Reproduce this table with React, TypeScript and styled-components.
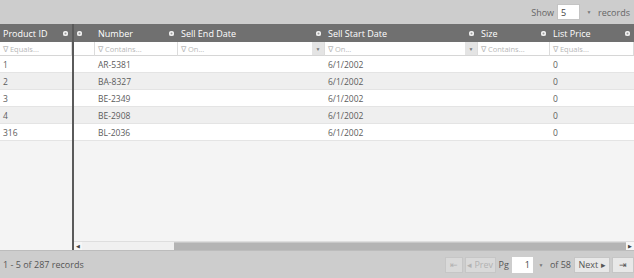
import React from 'react'
import styled, { createGlobalStyle } from 'styled-components'

const GlobalStyle = createGlobalStyle`
  body {
    margin: 0;
    background: #f4f4f4;
    font-family: 'Open Sans', 'Noto Sans', sans-serif;
  }
`

const Page = styled.div`
  width: 634px;
  height: 278px;
  display: flex;
  flex-direction: column;
  overflow: hidden;
  font-size: 8.5px;
  color: #555;
`

const TopBar = styled.div`
  height: 24px;
  background: #cdcdcd;
  display: flex;
  align-items: center;
  justify-content: flex-end;
  padding-right: 4px;
  gap: 3px;
  color: #666;
  font-size: 9px;
`

const ShowInput = styled.div`
  width: 23px;
  height: 16px;
  box-sizing: border-box;
  background: #fff;
  border: 1px solid #c4c4c4;
  display: flex;
  align-items: center;
  padding-left: 3px;
  color: #444;
`

const Caret = styled.span`
  width: 12px;
  text-align: center;
  font-size: 5px;
  color: #777;
`

const Body = styled.div`
  flex: 1;
  display: flex;
  min-height: 0;
`

const Pane = styled.div<{ $w?: number }>`
  display: flex;
  flex-direction: column;
  ${(p) => (p.$w ? `width: ${p.$w}px;` : 'flex: 1; min-width: 0;')}
`

const Divider = styled.div`
  width: 2px;
  background: #5a5a5a;
`

const Row = styled.div<{ $cols: string }>`
  display: grid;
  grid-template-columns: ${(p) => p.$cols};
`

const HeadCell = styled.div`
  height: 18px;
  background: #707070;
  color: #fff;
  display: flex;
  align-items: center;
  justify-content: space-between;
  padding: 0 4px 0 3px;
  font-size: 9px;
  white-space: nowrap;
`

const Gear = styled.span`
  width: 5px;
  height: 5px;
  border-radius: 50%;
  background: #f2f2f2;
  box-shadow: inset 0 0 0 1.5px #f2f2f2, inset 0 0 0 3px #9a9a9a;
  flex-shrink: 0;
`

const FilterCell = styled.div`
  height: 13px;
  background: #fff;
  border-right: 1px solid #dcdcdc;
  border-bottom: 1px solid #d6d6d6;
  display: flex;
  align-items: center;
  color: #b8b8b8;
  font-size: 7.5px;
  white-space: nowrap;
  overflow: hidden;
`

const FilterText = styled.span`
  flex: 1;
  padding-left: 3px;
`

const FilterDrop = styled.span`
  width: 12px;
  height: 13px;
  background: #e4e4e4;
  color: #777;
  font-size: 5px;
  display: flex;
  align-items: center;
  justify-content: center;
`

const Cell = styled.div<{ $alt: boolean }>`
  height: 17px;
  box-sizing: border-box;
  background: ${(p) => (p.$alt ? '#efefef' : '#fff')};
  border-bottom: 1px solid #e4e4e4;
  display: flex;
  align-items: center;
  padding-left: 3px;
  white-space: nowrap;
  font-size: 8.5px;
  color: #5c5c5c;
`

const Filler = styled.div`
  flex: 1;
  background: #f4f4f4;
`

const HScroll = styled.div`
  height: 8px;
  display: flex;
  background: #ececec;
  border-top: 1px solid #dedede;
`

const ScrollArrow = styled.span`
  width: 8px;
  font-size: 5px;
  color: #444;
  display: flex;
  align-items: center;
  justify-content: center;
  background: #f6f6f6;
`

const ScrollTrack = styled.div`
  width: 92px;
  background: #f0f0f0;
`

const ScrollThumb = styled.div`
  flex: 1;
  background: #b4b4b4;
  border-top: 1px solid #c8c8c8;
`

const Footer = styled.div`
  height: 28px;
  background: #cdcdcd;
  border-top: 1px solid #bcbcbc;
  box-sizing: border-box;
  display: flex;
  align-items: center;
  justify-content: space-between;
  padding: 0 0 0 3px;
  font-size: 9px;
  color: #555;
`

const Pager = styled.div`
  display: flex;
  align-items: center;
  gap: 2px;
`

const PageBtn = styled.span<{ $disabled?: boolean; $w: number }>`
  width: ${(p) => p.$w}px;
  height: 16px;
  box-sizing: border-box;
  background: ${(p) => (p.$disabled ? '#d9d9d9' : '#e8e8e8')};
  border: 1px solid #c6c6c6;
  color: ${(p) => (p.$disabled ? '#b2b2b2' : '#555')};
  display: flex;
  align-items: center;
  justify-content: center;
  gap: 2px;
  font-size: 9px;
`

const Label = styled.span`
  padding: 0 1px;
  color: #555;
`

const PgInput = styled.span`
  width: 21px;
  height: 16px;
  box-sizing: border-box;
  background: #fff;
  display: flex;
  align-items: center;
  justify-content: flex-end;
  padding-right: 3px;
  color: #444;
`

const frozenCols = '72px'
const cols = '21px 83px 147px 153px 72px 84px'

const headers = ['', 'Number', 'Sell End Date', 'Sell Start Date', 'Size', 'List Price']
const filters: { text: string; drop?: boolean }[] = [
  { text: '' },
  { text: 'Contains...' },
  { text: 'On...', drop: true },
  { text: 'On...', drop: true },
  { text: 'Contains...' },
  { text: 'Equals...' },
]

const rows = [
  { id: '1', number: 'AR-5381' },
  { id: '2', number: 'BA-8327' },
  { id: '3', number: 'BE-2349' },
  { id: '4', number: 'BE-2908' },
  { id: '316', number: 'BL-2036' },
]

const Filter = ({ text, drop }: { text: string; drop?: boolean }) => (
  <FilterCell>
    <FilterText>{text && `∇ ${text}`}</FilterText>
    {drop && <FilterDrop>▼</FilterDrop>}
  </FilterCell>
)

export default function App() {
  return (
    <Page>
      <GlobalStyle />
      <TopBar>
        <span>Show</span>
        <ShowInput>5</ShowInput>
        <Caret>▼</Caret>
        <span>records</span>
      </TopBar>
      <Body>
        <Pane $w={72}>
          <Row $cols={frozenCols}>
            <HeadCell>
              Product ID
              <Gear />
            </HeadCell>
          </Row>
          <Row $cols={frozenCols}>
            <Filter text="Equals..." />
          </Row>
          {rows.map((r, i) => (
            <Row $cols={frozenCols} key={r.id}>
              <Cell $alt={i % 2 === 1}>{r.id}</Cell>
            </Row>
          ))}
          <Filler />
        </Pane>
        <Divider />
        <Pane>
          <Row $cols={cols}>
            {headers.map((h, i) => (
              <HeadCell key={i}>
                {h}
                <Gear />
              </HeadCell>
            ))}
          </Row>
          <Row $cols={cols}>
            {filters.map((f, i) => (
              <Filter key={i} {...f} />
            ))}
          </Row>
          {rows.map((r, i) => (
            <Row $cols={cols} key={r.id}>
              <Cell $alt={i % 2 === 1} />
              <Cell $alt={i % 2 === 1}>{r.number}</Cell>
              <Cell $alt={i % 2 === 1} />
              <Cell $alt={i % 2 === 1}>6/1/2002</Cell>
              <Cell $alt={i % 2 === 1} />
              <Cell $alt={i % 2 === 1}>0</Cell>
            </Row>
          ))}
          <Filler />
          <HScroll>
            <ScrollArrow>◀</ScrollArrow>
            <ScrollTrack />
            <ScrollThumb />
            <ScrollArrow>▶</ScrollArrow>
          </HScroll>
        </Pane>
      </Body>
      <Footer>
        <span>1 - 5 of 287 records</span>
        <Pager>
          <PageBtn $disabled $w={18}>⇤</PageBtn>
          <PageBtn $disabled $w={31}>◂ Prev</PageBtn>
          <Label>Pg</Label>
          <PgInput>1</PgInput>
          <Caret>▼</Caret>
          <Label>of 58</Label>
          <PageBtn $w={36}>Next ▸</PageBtn>
          <PageBtn $w={22}>⇥</PageBtn>
        </Pager>
      </Footer>
    </Page>
  )
}
